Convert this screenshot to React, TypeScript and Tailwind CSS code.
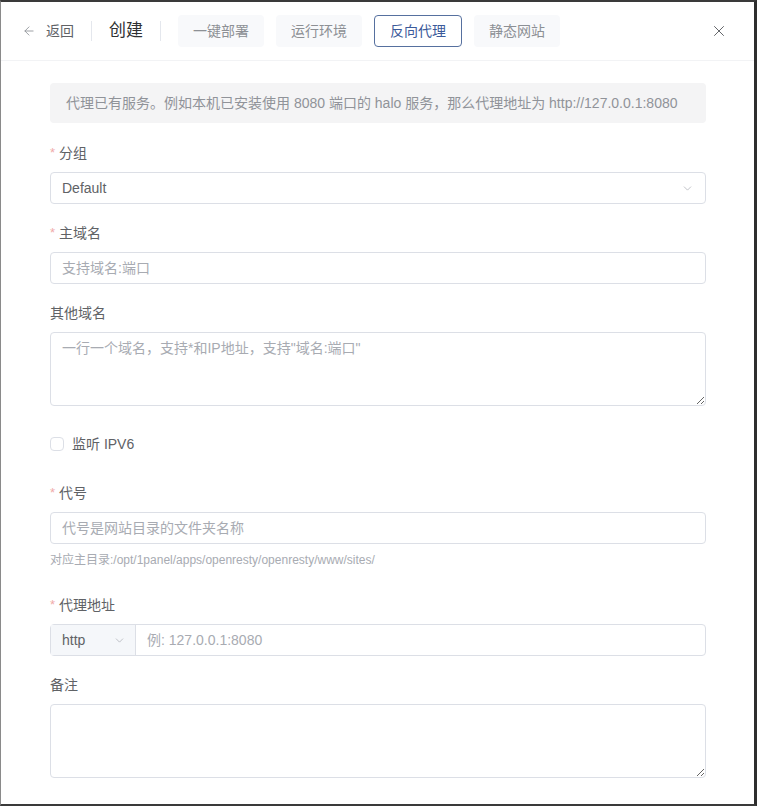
import { ArrowLeft, ChevronDown, X } from "lucide-react";
import type { ReactNode } from "react";

const FONT = { fontFamily: '"Liberation Sans", "Noto Sans CJK SC", sans-serif' };

const TABS = [
  { label: "一键部署", active: false },
  { label: "运行环境", active: false },
  { label: "反向代理", active: true },
  { label: "静态网站", active: false },
];

function Label({ children, required }: { children: ReactNode; required?: boolean }) {
  return (
    <div className="mb-2 flex h-[22px] items-center text-sm text-[#606266]">
      {required && <span className="mr-1 text-[13px] text-[#f0aaaa]">*</span>}
      {children}
    </div>
  );
}

function TextInput({ placeholder }: { placeholder: string }) {
  return (
    <input
      placeholder={placeholder}
      className="h-8 w-full rounded border border-[#dcdfe6] px-[11px] text-sm text-[#606266] outline-none placeholder:text-[#a8abb2]"
    />
  );
}

function TextArea({ placeholder }: { placeholder?: string }) {
  return (
    <textarea
      rows={3}
      placeholder={placeholder}
      className="block h-[74px] w-full rounded border border-[#dcdfe6] px-[11px] py-[5px] text-sm leading-[21px] text-[#606266] outline-none placeholder:text-[#a8abb2]"
    />
  );
}

export default function App() {
  return (
    <div className="h-[808px] w-full bg-white pb-[2px] pr-[2px]" style={FONT}>
      <div className="flex h-full flex-col border-b-[2px] border-l border-r-[3px] border-t-[2px] border-b-[#3a3a3a] border-l-[#8a8a8a] border-r-[#2e2e2e] border-t-[#3a3a3a] bg-white">
        <header className="flex h-[59px] shrink-0 items-center border-b border-[#f2f3f5] pl-[21px] pr-[26px]">
          <div className="flex items-center gap-[10px] text-sm text-[#606266]">
            <ArrowLeft size={14} strokeWidth={1.5} className="text-[#909399]" />
            <span>返回</span>
          </div>
          <div className="mx-[17px] h-5 w-px bg-[#e4e7ed]" />
          <span className="text-[17px] text-[#303133]">创建</span>
          <div className="ml-[17px] mr-[17px] h-5 w-px bg-[#e4e7ed]" />
          <div className="flex items-center gap-3">
            {TABS.map((t) =>
              t.active ? (
                <button
                  key={t.label}
                  className="h-8 w-[88px] rounded border border-[#56709f] text-sm text-[#3b5a9a]"
                >
                  {t.label}
                </button>
              ) : (
                <button
                  key={t.label}
                  className="h-8 w-[86px] rounded bg-[#f8f9fb] text-sm text-[#8d9095]"
                >
                  {t.label}
                </button>
              ),
            )}
          </div>
          <X size={18} strokeWidth={1.3} className="ml-auto text-[#606266]" />
        </header>

        <main className="pl-[49px] pr-[48px] pt-[22px]">
          <div className="mb-[19px] flex h-10 items-center rounded bg-[#f4f4f5] px-4 text-sm text-[#909399]">
            代理已有服务。例如本机已安装使用 8080 端口的 halo 服务，那么代理地址为 http://127.0.0.1:8080
          </div>

          <div className="mb-[18px]">
            <Label required>分组</Label>
            <div className="flex h-8 items-center justify-between rounded border border-[#dcdfe6] px-[11px] text-sm text-[#606266]">
              <span>Default</span>
              <ChevronDown size={13} strokeWidth={1.3} className="text-[#a8abb2]" />
            </div>
          </div>

          <div className="mb-[18px]">
            <Label required>主域名</Label>
            <TextInput placeholder="支持域名:端口" />
          </div>

          <div className="mb-[18px]">
            <Label>其他域名</Label>
            <TextArea placeholder={'一行一个域名，支持*和IP地址，支持"域名:端口"'} />
          </div>

          <div className="mb-[18px] flex h-10 items-center gap-2 text-sm text-[#606266]">
            <span className="h-[14px] w-[14px] rounded-sm border border-[#dcdfe6] bg-white" />
            <span>监听 IPV6</span>
          </div>

          <div className="mb-[24px]">
            <Label required>代号</Label>
            <TextInput placeholder="代号是网站目录的文件夹名称" />
            <div className="mt-[6px] text-xs leading-5 text-[#a8abb2]">
              对应主目录:/opt/1panel/apps/openresty/openresty/www/sites/
            </div>
          </div>

          <div className="mb-[18px]">
            <Label required>代理地址</Label>
            <div className="flex h-8 rounded border border-[#dcdfe6]">
              <div className="flex w-[85px] items-center justify-between border-r border-[#dcdfe6] bg-[#f5f7fa] pl-[11px] pr-[9px] text-sm text-[#606266]">
                <span>http</span>
                <ChevronDown size={13} strokeWidth={1.3} className="text-[#a8abb2]" />
              </div>
              <input
                placeholder="例: 127.0.0.1:8080"
                className="min-w-0 flex-1 px-[11px] text-sm text-[#606266] outline-none placeholder:text-[#a8abb2]"
              />
            </div>
          </div>

          <div>
            <Label>备注</Label>
            <TextArea />
          </div>
        </main>
      </div>
    </div>
  );
}
